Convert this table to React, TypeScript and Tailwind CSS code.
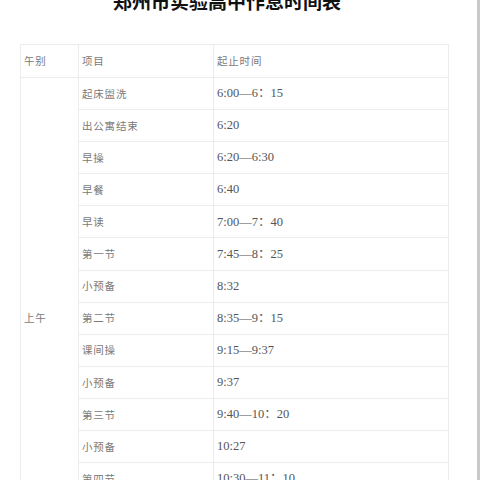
import React from "react";

const rows: [string, string][] = [
  ["起床盥洗", "6:00—6：15"],
  ["出公寓结束", "6:20"],
  ["早操", "6:20—6:30"],
  ["早餐", "6:40"],
  ["早读", "7:00—7：40"],
  ["第一节", "7:45—8：25"],
  ["小预备", "8:32"],
  ["第二节", "8:35—9：15"],
  ["课间操", "9:15—9:37"],
  ["小预备", "9:37"],
  ["第三节", "9:40—10：20"],
  ["小预备", "10:27"],
  ["第四节", "10:30—11：10"],
  ["小预备", "11:17"],
  ["第五节", "11:20—12:00"],
];

const cjk = { fontFamily: '"Noto Sans CJK SC", sans-serif' };
const num = { fontFamily: '"Liberation Serif", "Noto Sans CJK SC", serif' };

export default function App() {
  return (
    <div className="w-[480px] h-[480px] overflow-hidden bg-white flex">
      <div className="w-[477px] h-full overflow-hidden">
        <div
          className="mt-[-9px] pl-[113px] text-[19px] leading-[19px] font-bold text-[#111] whitespace-nowrap"
          style={cjk}
        >
          郑州市实验高中作息时间表
        </div>
        <table className="ml-[20px] mt-[34px] w-[428px] border-collapse table-fixed">
          <colgroup>
            <col className="w-[58px]" />
            <col className="w-[135px]" />
            <col className="w-[235px]" />
          </colgroup>
          <tbody>
            <tr className="h-[33px]">
              <td className="border border-[#ececec] px-[3px] text-[10.5px] tracking-[0.8px] text-[#7a7a7a] align-middle" style={cjk}>
                午别
              </td>
              <td className="border border-[#ececec] px-[3px] text-[10.5px] tracking-[0.8px] text-[#7a7a7a] align-middle" style={cjk}>
                项目
              </td>
              <td className="border border-[#ececec] px-[3px] text-[10.5px] tracking-[0.8px] text-[#7a7a7a] align-middle" style={cjk}>
                起止时间
              </td>
            </tr>
            {rows.map(([item, time], i) => (
              <tr key={i} className="h-[32.1px]">
                {i === 0 && (
                  <td
                    rowSpan={rows.length}
                    className="border border-[#ececec] px-[3px] text-[10.5px] tracking-[0.8px] text-[#7a7a7a] align-middle"
                    style={cjk}
                  >
                    上午
                  </td>
                )}
                <td className="border border-[#ececec] px-[3px] text-[10.5px] tracking-[0.8px] text-[#7a7a7a] align-middle whitespace-nowrap" style={cjk}>
                  {item}
                </td>
                <td className="border border-[#ececec] px-[3px] text-[12.5px] text-[#555] align-middle whitespace-nowrap" style={num}>
                  {time}
                </td>
              </tr>
            ))}
          </tbody>
        </table>
      </div>
      <div className="w-[3px] h-full bg-[#c9c9c9]" />
    </div>
  );
}
